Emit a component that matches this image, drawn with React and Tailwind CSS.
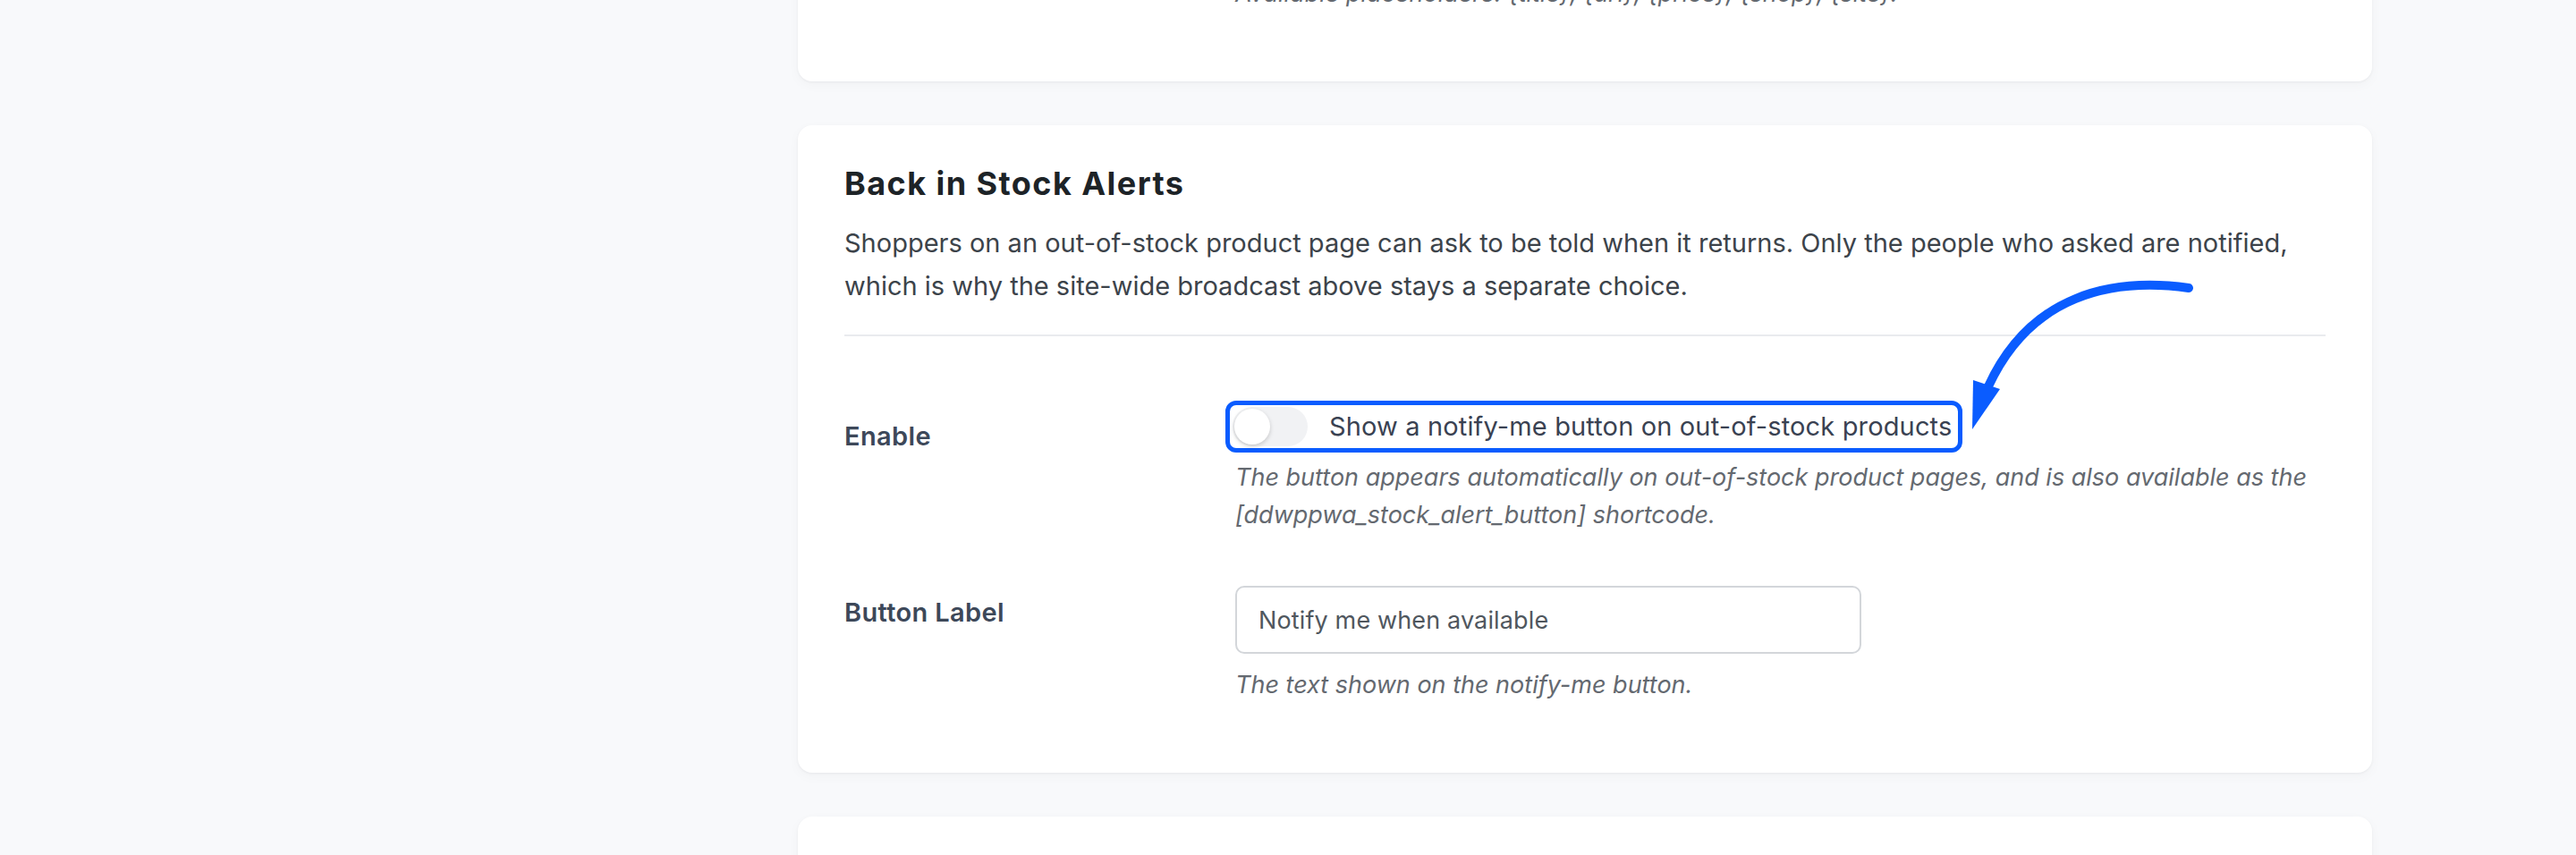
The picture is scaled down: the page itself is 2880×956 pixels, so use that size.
import { useState } from "react";

// Toggle switch used by the settings rows
function Toggle({ checked, onChange }) {
  return (
    <button
      type="button"
      role="switch"
      aria-checked={checked}
      onClick={() => onChange(!checked)}
      className={`relative h-[44px] w-[84px] shrink-0 rounded-full transition-colors ${
        checked ? "bg-[#2563eb]" : "bg-[#f1f2f4]"
      }`}
    >
      <span
        className={`absolute top-[2px] left-[2px] h-[40px] w-[40px] rounded-full bg-white shadow-[0_2px_5px_rgba(0,0,0,0.18)] transition-transform ${
          checked ? "translate-x-[40px]" : "translate-x-0"
        }`}
      />
    </button>
  );
}

function Row({ label, labelPad, children, className = "" }) {
  return (
    <div className={`grid grid-cols-[437px_1fr] ${className}`}>
      <div
        className={`text-[29px] leading-[48px] font-semibold tracking-[0.012em] text-[#3d4859] ${labelPad}`}
      >
        {label}
      </div>
      <div>{children}</div>
    </div>
  );
}

function Help({ children, className = "" }) {
  return (
    <p className={`text-[27px] leading-[42px] italic text-[#646970] ${className}`}>
      {children}
    </p>
  );
}

export default function App() {
  const [enabled, setEnabled] = useState(false);
  const [buttonLabel, setButtonLabel] = useState("Notify me when available");

  return (
    <div className="h-screen overflow-hidden bg-[#f8f9fb] font-['Inter','Noto_Sans',sans-serif]">
      <div className="flex">
        {/* sidebar column left empty */}
        <aside className="w-[892px] shrink-0" />

        <main className="flex w-[1760px] flex-col gap-[49px]">
          {/* Previous section (broadcast settings), scrolled past */}
          <section className="-mt-[109px] flex h-[200px] flex-col justify-end rounded-[16px] bg-white px-[52px] pb-[77px] shadow-[0_1px_3px_rgba(15,23,42,0.05),0_4px_14px_rgba(15,23,42,0.03)]">
            <div className="grid grid-cols-[437px_1fr]">
              <div />
              <Help>
                Available placeholders: {"{title}"}, {"{url}"}, {"{price}"},{" "}
                {"{shop}"}, {"{site}"}.
              </Help>
            </div>
          </section>

          {/* Back in Stock Alerts */}
          <section className="relative rounded-[16px] bg-white px-[52px] pt-[42px] pb-[77px] shadow-[0_1px_3px_rgba(15,23,42,0.05),0_4px_14px_rgba(15,23,42,0.03)]">
            <h2 className="text-[36px] leading-[46px] font-bold tracking-[0.04em] text-[#1d2327]">
              Back in Stock Alerts
            </h2>
            <p className="mt-[20px] text-[29px] leading-[48px] text-[#3c434a]">
              Shoppers on an out-of-stock product page can ask to be told when it
              returns. Only the people who asked are notified, which is why the
              site-wide broadcast above stays a separate choice.
            </p>
            <hr className="mt-[30px] border-0 border-t-2 border-[#e9ebee]" />

            <Row label="Enable" labelPad="pt-[16px]" className="mt-[72px]">
              <label className="-ml-[11px] inline-flex h-[58px] cursor-pointer items-center gap-[24px] rounded-[12px] border-[5px] border-[#0a5cff] pr-[7px] pl-[3px]">
                <Toggle checked={enabled} onChange={setEnabled} />
                <span className="text-[29px] leading-[48px] tracking-[0.005em] text-[#3a4252]">
                  Show a notify-me button on out-of-stock products
                </span>
              </label>
              <Help className="mt-[7px]">
                The button appears automatically on out-of-stock product pages, and
                is also available as the [ddwppwa_stock_alert_button] shortcode.
              </Help>
            </Row>

            <Row label="Button Label" labelPad="pt-[6px]" className="mt-[58px]">
              <input
                type="text"
                value={buttonLabel}
                onChange={(e) => setButtonLabel(e.target.value)}
                className="block h-[76px] w-[700px] rounded-[10px] border-2 border-[#d3d6da] bg-white px-[24px] text-[27px] tracking-[0.005em] text-[#50575e] outline-none"
              />
              <Help className="mt-[14px]">The text shown on the notify-me button.</Help>
            </Row>

            {/* callout arrow pointing at the toggle */}
            <svg
              className="pointer-events-none absolute top-[150px] left-[1298px]"
              width="280"
              height="210"
              viewBox="0 0 280 210"
              fill="none"
            >
              <path
                d="M257 32 C170 20 80 40 33 142"
                stroke="#0a5cff"
                strokeWidth="10"
                strokeLinecap="round"
              />
              <path d="M16 135 L46 145 L15 190 Z" fill="#0a5cff" />
            </svg>
          </section>

          {/* Next section */}
          <section className="h-[300px] rounded-[16px] bg-white shadow-[0_1px_3px_rgba(15,23,42,0.05),0_4px_14px_rgba(15,23,42,0.03)]" />
        </main>
      </div>
    </div>
  );
}
